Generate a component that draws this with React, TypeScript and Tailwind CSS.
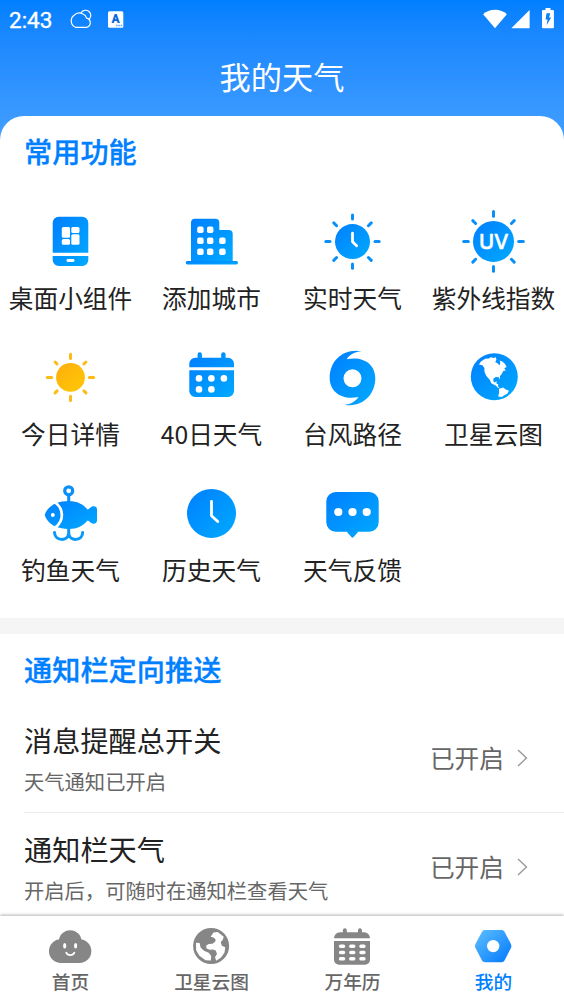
import type { ReactNode } from "react";

const GRADIENT = "url(#blue)";

function Icon({ children }: { children: ReactNode }) {
  return (
    <svg width="65" height="64" viewBox="0 0 65 64" fill={GRADIENT}>
      {children}
    </svg>
  );
}

function NavIcon({ children }: { children: ReactNode }) {
  return (
    <svg width="65" height="40" viewBox="0 0 65 40" fill="#868686">
      {children}
    </svg>
  );
}

const DIAGONALS = [45, 135, 225, 315];
const STRAIGHTS = [0, 90, 180, 270];

function Rays({
  cy,
  from,
  to,
  diagFrom,
  diagTo,
  color,
}: {
  cy: number;
  from: number;
  to: number;
  diagFrom: number;
  diagTo: number;
  color: string;
}) {
  return (
    <g stroke={color} strokeWidth="3" strokeLinecap="round">
      {STRAIGHTS.map((a) => (
        <path key={a} d={`M32.5 ${cy - from}V${cy - to}`} transform={`rotate(${a} 32.5 ${cy})`} />
      ))}
      {DIAGONALS.map((a) => (
        <path
          key={a}
          d={`M32.5 ${cy - diagFrom}V${cy - diagTo}`}
          transform={`rotate(${a} 32.5 ${cy})`}
        />
      ))}
    </g>
  );
}

function WidgetIcon() {
  return (
    <Icon>
      <path d="M20.7 7.7h23.6a6 6 0 0 1 6 6v30H14.7v-30a6 6 0 0 1 6-6zM14.7 47h35.6v4a6 6 0 0 1-6 6H20.7a6 6 0 0 1-6-6z" />
      <g fill="#fff">
        <rect x="23.8" y="18" width="8.2" height="10.8" rx="1.5" />
        <rect x="33.3" y="18" width="8.2" height="6" rx="1.5" />
        <rect x="23.8" y="30" width="8.2" height="5.8" rx="1.5" />
        <rect x="33.3" y="25.3" width="8.2" height="10.5" rx="1.5" />
        <rect x="28.5" y="50" width="8" height="3" rx="1.4" />
      </g>
    </Icon>
  );
}

function CityIcon() {
  return (
    <Icon>
      <path d="M12 53V13.7a4 4 0 0 1 4-4h20.3a4 4 0 0 1 4 4V21h9.4a4 4 0 0 1 4 4v28z" />
      <rect x="6.7" y="52" width="52.3" height="3.4" rx="1.7" />
      <g fill="#fff">
        {[17.6, 28.6, 39.6].map((y) => (
          <g key={y}>
            <rect x="18.2" y={y} width="6.4" height="6.4" rx="1.8" />
            <rect x="28" y={y} width="6.4" height="6.4" rx="1.8" />
            {y > 20 && <rect x="40.2" y={y} width="6.4" height="6.4" rx="1.8" />}
          </g>
        ))}
      </g>
    </Icon>
  );
}

function LiveIcon() {
  return (
    <Icon>
      <circle cx="32.5" cy="32.6" r="17.5" />
      <Rays cy={32.6} from={22.5} to={26.7} diagFrom={22.5} diagTo={26.5} color="#0990f8" />
      <path d="M32.5 24.2v8.6l4.1 3.9" fill="none" stroke="#fff" strokeWidth="2.8" strokeLinecap="round" strokeLinejoin="round" />
    </Icon>
  );
}

function UvIcon() {
  return (
    <Icon>
      <circle cx="32.5" cy="32.4" r="20.5" />
      <Rays cy={32.4} from={25.2} to={29.8} diagFrom={25.3} diagTo={29.3} color="#0990f8" />
      <text
        x="32.8"
        y="40.4"
        textAnchor="middle"
        textLength="29.5"
        fill="#fff"
        stroke="#fff"
        strokeWidth="0.5"
        strokeLinejoin="round"
        className="font-['Inter',sans-serif] text-[20.5px] font-medium"
      >
        UV
      </text>
    </Icon>
  );
}

function SunIcon() {
  return (
    <Icon>
      <circle cx="32.5" cy="32.4" r="14.4" fill="url(#amber)" />
      <Rays cy={32.4} from={18.8} to={23.2} diagFrom={19} diagTo={21.8} color="#fcbb15" />
    </Icon>
  );
}

function CalendarIcon() {
  return (
    <Icon>
      <rect x="18.6" y="7.3" width="4.4" height="9" rx="2.2" />
      <rect x="42.2" y="7.3" width="4.4" height="9" rx="2.2" />
      <path d="M16.3 12.7H49a6 6 0 0 1 6 6v3.6H10.3v-3.6a6 6 0 0 1 6-6zM10.3 25.3H55V46a6 6 0 0 1-6 6H16.3a6 6 0 0 1-6-6z" />
      <g fill="#fff">
        {[20, 32.4, 44.9].map((x) => (
          <circle key={x} cx={x} cy="33.4" r="3.3" />
        ))}
        <circle cx="20" cy="44.4" r="3.3" />
        <circle cx="32.4" cy="44.4" r="3.3" />
      </g>
    </Icon>
  );
}

function TyphoonIcon() {
  return (
    <Icon>
      <path
        fillRule="evenodd"
        d="M41.7 6.3C24 3 9.7 15 9.7 33c0 14 12.3 22.5 28.8 19-2.5 4-7.5 7.3-14.2 7.7C42 63 55.3 50 55.3 33.3 55.3 19 43 11 26.7 14.3 29 10 35 6.7 41.7 6.3zM32.5 24.3a9 9 0 1 1 0 18 9 9 0 0 1 0-18z"
      />
    </Icon>
  );
}

function EarthIcon() {
  return (
    <Icon>
      <circle cx="33.3" cy="31.7" r="23.5" />
      <path
        fill="#fff"
        d="M17.6 20l2.3-3.6 4.3-2.7 3.5-.3 2-1.1 3.5.6 1.4-.8.9 2.4-1.2 2.4 2.6 1.5 1.5 2.2.9-2.8-.7-2.4 2.7 1 2.5 2.4 1.8 3-2.3 1.6 1.5 2.2-2.6.4-1.3 2.8-2 2.5.2 3.5-1.3-2.6-3.1-.3-2.4 1.8.2 3 1.4.7 1.6-1.3.1 2.6 1.5.5.1 2.5 1.3.7-1.2.7-2.7-2.7-4.3-2.1-1.4-3.4-3.5-4-1.9-4-.1-4-2-2.6-3.3-.7zM38 43.7l4.2-1.3 2.2 1.9 3.5 1.4-1.6 3-3.5 1.7-1.7 1.6-3.9-.6.9-3.6z"
      />
    </Icon>
  );
}

function FishIcon() {
  return (
    <Icon>
      <circle cx="30.7" cy="9.8" r="4" fill="none" stroke="#0990f8" strokeWidth="3.2" />
      <path d="M29.2 14.5h3v7h-3z" fill="#0990f8" />
      <path d="M6.7 34C9.5 25 19 20 31 20c8.2 0 14.5 3.5 18.5 8.5 2.5-.5 3-3.2 6-3.2 2.3 0 3.5 1.2 3.5 3.2v11c0 2-1.2 3.2-3.5 3.2-3 0-3.5-2.7-6-3.2C45.5 44.5 39 48 31 48 19 48 9.5 43 6.7 34z" />
      <path d="M17.3 21.5c8.8 6.8 8.8 18.2 0 25" fill="none" stroke="#fff" strokeWidth="2.7" />
      <circle cx="14.8" cy="34" r="2" fill="#fff" />
      <path
        d="M30.7 47v6M16.5 51.5c.6 9 13.4 9 14.2 1 .8 8 13.6 8 14-1"
        fill="none"
        stroke="#0698fb"
        strokeWidth="3"
        strokeLinecap="round"
      />
    </Icon>
  );
}

function HistoryIcon() {
  return (
    <Icon>
      <circle cx="32.5" cy="32.4" r="24.5" />
      <path d="M32.5 20.3v14.5l6.2 5.8" fill="none" stroke="#fff" strokeWidth="2.8" strokeLinecap="round" strokeLinejoin="round" />
    </Icon>
  );
}

function FeedbackIcon() {
  return (
    <Icon>
      <path d="M15.8 11h33.4a9.5 9.5 0 0 1 9.5 9.5v20.7a9.5 9.5 0 0 1-9.5 9.5h-11l-4.6 5.4a1.5 1.5 0 0 1-2.2 0l-4.6-5.4h-11a9.5 9.5 0 0 1-9.5-9.5V20.5a9.5 9.5 0 0 1 9.5-9.5z" />
      <g fill="#fff">
        <circle cx="18.3" cy="31" r="4.1" />
        <circle cx="32.5" cy="31" r="4.1" />
        <circle cx="46.7" cy="31" r="4.1" />
      </g>
    </Icon>
  );
}

const features = [
  { label: "桌面小组件", icon: <WidgetIcon /> },
  { label: "添加城市", icon: <CityIcon /> },
  { label: "实时天气", icon: <LiveIcon /> },
  { label: "紫外线指数", icon: <UvIcon /> },
  { label: "今日详情", icon: <SunIcon /> },
  { label: "40日天气", icon: <CalendarIcon /> },
  { label: "台风路径", icon: <TyphoonIcon /> },
  { label: "卫星云图", icon: <EarthIcon /> },
  { label: "钓鱼天气", icon: <FishIcon /> },
  { label: "历史天气", icon: <HistoryIcon /> },
  { label: "天气反馈", icon: <FeedbackIcon /> },
];

const settings = [
  { title: "消息提醒总开关", desc: "天气通知已开启", value: "已开启" },
  { title: "通知栏天气", desc: "开启后，可随时在通知栏查看天气", value: "已开启" },
];

const tabs = [
  {
    label: "首页",
    icon: (
      <NavIcon>
        <circle cx="32.2" cy="15.6" r="11.4" />
        <rect x="11" y="13.3" width="42.3" height="23.7" rx="11.8" />
        <g fill="#fff">
          <ellipse cx="26.7" cy="19.8" rx="1.6" ry="2.8" />
          <ellipse cx="37.6" cy="19.8" rx="1.6" ry="2.8" />
        </g>
        <path d="M28.2 26.7c1.6 3.3 6.6 3.3 8.2 0" fill="none" stroke="#fff" strokeWidth="1.8" strokeLinecap="round" />
      </NavIcon>
    ),
  },
  {
    label: "卫星云图",
    icon: (
      <NavIcon>
        <circle cx="32.1" cy="20" r="18" />
        <path
          fill="#fff"
          d="M17 16.7l3.6.3 1 4.6 3.4 3.2 4.7 2 2.5 3.2-.4 4.6-5.2-.4-6.2-4.5-3.3-5.5zM31.6 10.7l2.9-4.2 4.2-.4 6 4.6-1 3.3-2 1.9 1.2 3.9 3.4 1.4-.8 5.3-3.4 5-4.9 3.3-1.2-3.6 2-3.3-1.3-3.3-2.7-1.2-3.2.3-3.3-1.3-.3-2.8 2.6-1.7 3.7-.2 2.9-2.2.1-2.3-2-1.6z"
        />
      </NavIcon>
    ),
  },
  {
    label: "万年历",
    icon: (
      <NavIcon>
        <rect x="22.9" y="2.3" width="3.9" height="8" rx="1.9" />
        <rect x="38" y="2.3" width="3.9" height="8" rx="1.9" />
        <path d="M20 6.3h24a6 6 0 0 1 6 6H14a6 6 0 0 1 6-6zM14 15h36v18.7a5 5 0 0 1-5 5H19a5 5 0 0 1-5-5z" />
        <g fill="#fff">
          {[18.4, 24.7, 31].map((y) =>
            [18.9, 29.1, 39.3].map((x) => (
              <rect key={`${x}-${y}`} x={x} y={y} width="6.3" height="3.5" rx="1.6" />
            ))
          )}
        </g>
      </NavIcon>
    ),
  },
  {
    label: "我的",
    active: true,
    icon: (
      <NavIcon>
        <path
          fill="url(#tab)"
          d="M24 4h16.5c1.3 0 2.3.5 3 1.7l6.3 12c.8 1.5.8 3.1 0 4.6l-6.3 12.3c-.7 1.2-1.7 1.7-3 1.7H24c-1.3 0-2.3-.5-3-1.7l-6.4-12.3c-.8-1.5-.8-3.1 0-4.6L21 5.7C21.7 4.5 22.7 4 24 4z"
        />
        <circle cx="32.2" cy="20.1" r="6.2" fill="#fff" />
      </NavIcon>
    ),
  },
];

function StatusBar() {
  return (
    <div className="flex h-[38px] items-center pr-2.5 pl-[9px] text-white">
      <span className="w-[60px] pt-px font-['Roboto',sans-serif] text-[22.5px] leading-6 [-webkit-text-stroke:0.35px_white]">
        2:43
      </span>
      <svg width="26" height="22" viewBox="0 0 26 22" fill="none" stroke="#fff" strokeWidth="1.2">
        <path d="M6.5 19.3a7 7 0 0 1-1.5-12 7.5 7.5 0 0 1 8.5-1.6 7 7 0 0 1 4.2 4.4 4.8 4.8 0 0 1 .3 9.2z" />
        <path d="M12 5a5.2 5.2 0 1 1 8.200 6.200" />
      </svg>
      <svg className="ml-[13px]" width="16" height="17" viewBox="0 0 16 17">
        <rect width="15.3" height="16.5" y=".3" rx="1.5" fill="#fff" />
        <text x="7.5" y="12" textAnchor="middle" fill="#0a66d8" className="font-['Roboto',sans-serif] text-[12px] font-black">
          A
        </text>
        <path d="M8 14.5h1.5M10.3 14.5h1.5M12.6 14.5h1.5" stroke="#5aa5f5" strokeWidth="1.3" />
      </svg>
      <div className="ml-auto flex items-center">
        <svg width="24" height="20" viewBox="0 0 24 20" fill="#fff">
          <path d="M12 19.2L.1 5.2C3.2 2.3 7.3.7 12 .7s8.8 1.6 11.9 4.5z" />
        </svg>
        <svg className="ml-1" width="19" height="20" viewBox="0 0 19 20" fill="#fff">
          <path d="M18.6.9v18.3H.3z" />
        </svg>
        <svg className="ml-3" width="12" height="22" viewBox="0 0 12 22">
          <path d="M3.5 0h5v2h2.4a1 1 0 0 1 1 1v16.3a1 1 0 0 1-1 1H1a1 1 0 0 1-1-1V3a1 1 0 0 1 1-1h2.5z" fill="#fff" />
          <path d="M4.5 5.3h3.8L7 9.5h2.2L4.7 17l.8-5.5H3.6z" fill="#0a80f5" />
        </svg>
      </div>
    </div>
  );
}

function SectionTitle({ children }: { children: ReactNode }) {
  return (
    <h2 className="px-6 text-[28.2px] leading-9 font-medium text-[#007fff] [-webkit-text-stroke:0.3px_#007fff]">
      {children}
    </h2>
  );
}

export default function App() {
  return (
    <div className="flex h-[1004px] w-[564px] flex-col overflow-hidden bg-white font-['Noto_Sans_CJK_SC',sans-serif] text-[#222]">
      {/* Shared gradients */}
      <svg width="0" height="0" className="absolute">
        <defs>
          <linearGradient id="blue" x1="0" y1="0" x2="1" y2="1">
            <stop offset="0" stopColor="#007fff" />
            <stop offset="1" stopColor="#00aaff" />
          </linearGradient>
          <linearGradient id="amber" x1="0" y1="0" x2="1" y2="1">
            <stop offset="0" stopColor="#ffae0d" />
            <stop offset="1" stopColor="#ffc805" />
          </linearGradient>
          <linearGradient id="tab" x1="0" y1="0" x2="1" y2="1">
            <stop offset="0.05" stopColor="#5abcff" />
            <stop offset="0.9" stopColor="#0a7fff" />
          </linearGradient>
        </defs>
      </svg>

      <header className="h-[141px] shrink-0 bg-linear-to-b from-[#007fff] to-[#429fff]">
        <StatusBar />
        <h1 className="mt-[18px] text-center text-[31.2px] leading-10 font-normal text-white">我的天气</h1>
      </header>

      <main className="-mt-[25px] min-h-0 flex-1 overflow-hidden rounded-t-[24px] bg-white">
        <section className="h-[502px] pt-[17px]">
          <SectionTitle>常用功能</SectionTitle>
          <div className="mt-10 grid grid-cols-4 gap-y-[30px]">
            {features.map((item) => (
              <div key={item.label} className="flex flex-col items-center gap-1.5">
                {item.icon}
                <span className="text-[24.7px] leading-9 whitespace-nowrap">{item.label}</span>
              </div>
            ))}
          </div>
        </section>

        <div className="h-4 bg-[#f5f5f5]" />

        <section className="pt-[17px]">
          <SectionTitle>通知栏定向推送</SectionTitle>
          <div className="mt-[17px] pl-6">
            {settings.map((row) => (
              <div key={row.title} className="flex h-[109px] items-center border-b border-[#ececec] pr-9">
                <div className="flex flex-col gap-2.5">
                  <span className="text-[28.2px] leading-9">{row.title}</span>
                  <span className="text-[20.3px] leading-[26px] text-[#666]">{row.desc}</span>
                </div>
                <span className="ml-auto pb-0.5 text-[24.7px] leading-9 text-[#666]">{row.value}</span>
                <svg className="ml-3" width="12" height="18" viewBox="0 0 12 18" fill="none" stroke="#999" strokeWidth="1.4">
                  <path d="M2 1l8.5 8L2 17" />
                </svg>
              </div>
            ))}
          </div>
        </section>
      </main>

      <nav className="relative grid h-[88px] shrink-0 grid-cols-4 bg-white pt-2.5 shadow-[0_-1px_3px_rgba(0,0,0,0.3)]">
        {tabs.map((tab) => (
          <div key={tab.label} className="flex flex-col items-center gap-px">
            {tab.icon}
            <span
              className={
                tab.active
                  ? "text-[18.7px] leading-7 font-medium text-[#007fff]"
                  : "text-[18.7px] leading-7 font-medium text-[#666]"
              }
            >
              {tab.label}
            </span>
          </div>
        ))}
      </nav>
    </div>
  );
}
